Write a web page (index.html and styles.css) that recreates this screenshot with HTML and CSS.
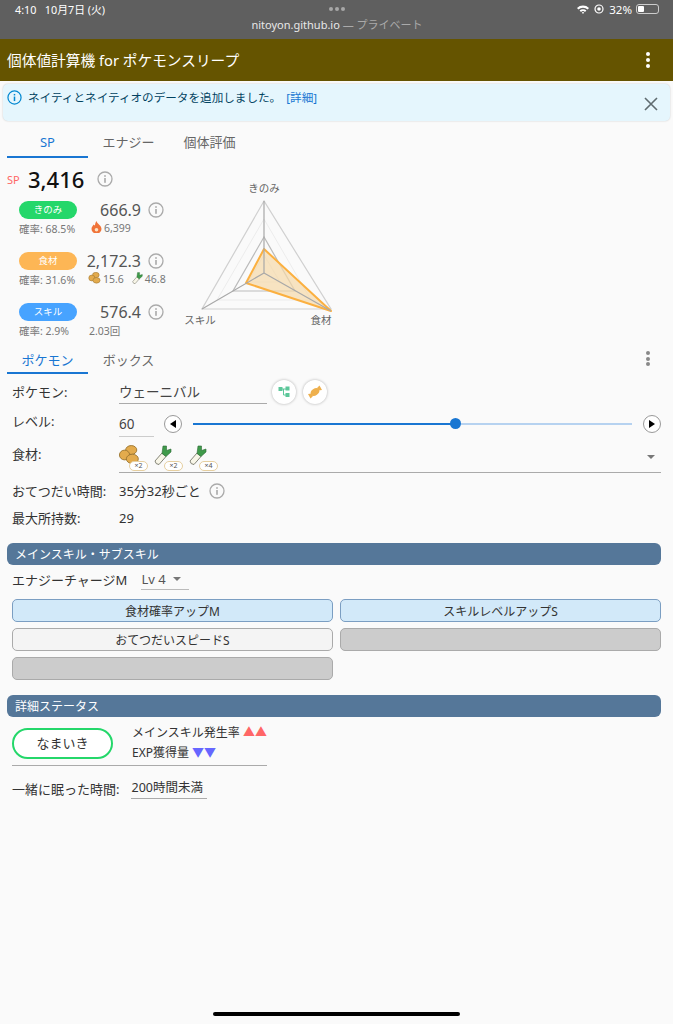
FILE: index.html
```html
<!DOCTYPE html>
<html lang="ja">
<head>
    <meta charset="UTF-8">
    <meta name="viewport" content="width=device-width, initial-scale=1.0">
    <title>個体値計算機 for ポケモンスリープ</title>
    <link rel="stylesheet" href="styles.css">
</head>
<body>

<svg class="defs" width="0" height="0">
    <defs>
        <g id="info">
            <circle cx="8" cy="8" r="7" fill="none" stroke="currentColor" stroke-width="1.3"/>
            <rect x="7.2" y="7" width="1.6" height="4.8" fill="currentColor"/>
            <rect x="7.2" y="4.2" width="1.6" height="1.6" fill="currentColor"/>
        </g>
        <g id="beans">
            <ellipse cx="11" cy="4.5" rx="5" ry="4" fill="#e3ab4d" stroke="#9a7430" stroke-width="0.8"/>
            <ellipse cx="5" cy="9" rx="4.6" ry="4.4" fill="#e3ab4d" stroke="#9a7430" stroke-width="0.8"/>
            <ellipse cx="12" cy="12.5" rx="5.4" ry="4.2" fill="#e3ab4d" stroke="#9a7430" stroke-width="0.8"/>
        </g>
        <g id="leek">
            <path d="M1 16 L8 8 L12 11.5 L5 19.5 Q1.5 19.5 1 16 Z" fill="#f8f6e8" stroke="#77776a" stroke-width="0.9"/>
            <path d="M8 8.5 L9 1 L12.5 1 L12.5 5.5 L17 4 L17 7 L12 11.5 Z" fill="#3f9a4a" stroke="#2d6a35" stroke-width="0.6"/>
        </g>
    </defs>
</svg>

<header class="status-bar">
    <div class="status-top">
        <span class="status-time">4:10&nbsp;&nbsp;&nbsp;10月7日 (火)</span>
        <span class="status-dots"><i></i><i></i><i></i></span>
        <span class="status-right">
            <svg width="12" height="9" viewBox="0 0 12 9"><path d="M0 3 A8.5 8.5 0 0 1 12 3 L10.6 4.6 A6.4 6.4 0 0 0 1.4 4.6 Z M2.6 5.6 A4.8 4.8 0 0 1 9.4 5.6 L8 7 A2.8 2.8 0 0 0 4 7 Z M4.8 7.6 A1.8 1.8 0 0 1 7.2 7.6 L6 9 Z" fill="#fff"/></svg>
            <svg width="10" height="10" viewBox="0 0 10 10"><circle cx="5" cy="5" r="4" fill="none" stroke="#fff" stroke-width="1.2"/><circle cx="5" cy="5" r="1.8" fill="#fff"/></svg>
            <span>32%</span>
            <span class="battery"><span class="battery-level"></span></span>
        </span>
    </div>
    <div class="status-url">nitoyon.github.io <span class="status-private">— プライベート</span></div>
</header>

<div class="app-bar">
    <span class="app-title">個体値計算機 for ポケモンスリープ</span>
    <span class="kebab kebab-white"><i></i><i></i><i></i></span>
</div>

<div class="alert">
    <svg class="alert-icon" width="15" height="15" viewBox="0 0 16 16"><use href="#info"/></svg>
    <span class="alert-text">ネイティとネイティオのデータを追加しました。 <span class="alert-link">[詳細]</span></span>
    <svg class="alert-close" width="14" height="14" viewBox="0 0 14 14"><path d="M1 1 L13 13 M13 1 L1 13" stroke="#5f6b70" stroke-width="1.6"/></svg>
</div>

<nav class="tabs tabs-rating">
    <span class="tab active">SP</span>
    <span class="tab">エナジー</span>
    <span class="tab">個体評価</span>
</nav>

<section class="rating">
    <div class="rating-left">
        <div class="sp-total">
            <span class="sp-label">SP</span>
            <span class="sp-value">3,416</span>
            <svg class="info-icon" width="16" height="16" viewBox="0 0 16 16"><use href="#info"/></svg>
        </div>

        <div class="stat">
            <div class="stat-main">
                <span class="pill pill-berry">きのみ</span>
                <span class="stat-value">666.9</span>
                <svg class="info-icon" width="16" height="16" viewBox="0 0 16 16"><use href="#info"/></svg>
            </div>
            <div class="stat-sub">
                <span class="stat-rate">確率: 68.5%</span>
                <svg class="fire" width="11" height="12" viewBox="0 0 11 12"><path d="M5.5 0 C6 3 10.5 4 10.5 8 A5 4.5 0 0 1 0.5 8 C0.5 5.5 2 5 2.5 3.5 C3.5 4.5 4 4.5 4 4 C4 3 4.5 1.5 5.5 0 Z" fill="#f0743a"/><circle cx="5.5" cy="8.8" r="1.8" fill="#fde3c4"/></svg>
                <span>6,399</span>
            </div>
        </div>

        <div class="stat">
            <div class="stat-main">
                <span class="pill pill-ingredient">食材</span>
                <span class="stat-value">2,172.3</span>
                <svg class="info-icon" width="16" height="16" viewBox="0 0 16 16"><use href="#info"/></svg>
            </div>
            <div class="stat-sub">
                <span class="stat-rate">確率: 31.6%</span>
                <svg class="sub-beans" width="13" height="12" viewBox="0 0 18 18"><use href="#beans"/></svg>
                <span class="sub-num">15.6</span>
                <svg class="sub-leek" width="11" height="12" viewBox="0 0 18 20"><use href="#leek"/></svg>
                <span>46.8</span>
            </div>
        </div>

        <div class="stat">
            <div class="stat-main">
                <span class="pill pill-skill">スキル</span>
                <span class="stat-value">576.4</span>
                <svg class="info-icon" width="16" height="16" viewBox="0 0 16 16"><use href="#info"/></svg>
            </div>
            <div class="stat-sub">
                <span class="stat-rate">確率: 2.9%</span>
                <span class="skill-count">2.03回</span>
            </div>
        </div>
    </div>

    <svg class="radar" width="170" height="170" viewBox="170 170 170 170">
        <polygon points="264,202 202,310 331,310" fill="none" stroke="#d0d0d0" stroke-width="1.2"/>
        <polygon points="264,220 217,301 311,301" fill="none" stroke="#ececec" stroke-width="1"/>
        <polygon points="264,238 233,292 295,292" fill="none" stroke="#bbb" stroke-width="1.2"/>
        <polygon points="264,256 248,283 280,283" fill="none" stroke="#ececec" stroke-width="1"/>
        <polygon points="264,250 331,312 246,284" fill="#f5d9a8" fill-opacity="0.7" stroke="#fbb040" stroke-width="2" stroke-linejoin="round"/>
        <path d="M264 202 V274 M264 274 L202 310 M264 274 L331 312" stroke="#a8a8a8" stroke-width="1.2" fill="none"/>
        <text class="radar-label" x="264" y="193" text-anchor="middle">きのみ</text>
        <text class="radar-label" x="200" y="325" text-anchor="middle">スキル</text>
        <text class="radar-label" x="321" y="325" text-anchor="middle">食材</text>
    </svg>
</section>

<nav class="tabs tabs-form">
    <span class="tab active">ポケモン</span>
    <span class="tab">ボックス</span>
    <span class="kebab kebab-gray"><i></i><i></i><i></i></span>
</nav>

<section class="form">
    <div class="form-row row-pokemon">
        <label class="form-label">ポケモン:</label>
        <span class="input input-pokemon">ウェーニバル</span>
        <span class="round-btn">
            <svg width="12" height="12" viewBox="0 0 12 12"><path d="M3 3 H9 M5.5 3 V9 H9" stroke="#5cc79a" fill="none"/><rect x="0.5" y="1" width="4" height="4" fill="#5cc79a"/><rect x="7.5" y="0.5" width="4" height="4" fill="#5cc79a"/><rect x="7.5" y="7" width="4" height="4" fill="#5cc79a"/></svg>
        </span>
        <span class="round-btn">
            <svg width="16" height="16" viewBox="0 0 16 16"><ellipse cx="8" cy="8" rx="4.6" ry="3.4" transform="rotate(-35 8 8)" fill="#eeb04e"/><path d="M4.5 9.5 L1 10 L3.5 14.5 L6 12 Z M11.5 6.5 L15 6 L12.5 1.5 L10 4 Z" fill="#eeb04e"/></svg>
        </span>
    </div>

    <div class="form-row row-level">
        <label class="form-label">レベル:</label>
        <span class="input input-level">60</span>
        <span class="step-btn"><span class="arrow-left"></span></span>
        <div class="slider">
            <div class="slider-fill"></div>
            <span class="slider-thumb"></span>
        </div>
        <span class="step-btn"><span class="arrow-right"></span></span>
    </div>

    <div class="form-row row-ingredients">
        <label class="form-label">食材:</label>
        <div class="ingredients">
            <span class="ingredient">
                <svg width="20" height="20" viewBox="0 0 18 18"><use href="#beans"/></svg>
                <span class="badge">×2</span>
            </span>
            <span class="ingredient">
                <svg width="18" height="20" viewBox="0 0 18 20"><use href="#leek"/></svg>
                <span class="badge">×2</span>
            </span>
            <span class="ingredient">
                <svg width="18" height="20" viewBox="0 0 18 20"><use href="#leek"/></svg>
                <span class="badge">×4</span>
            </span>
            <span class="select-arrow arrow-ingredients"></span>
        </div>
    </div>

    <div class="form-row row-help">
        <label class="form-label">おてつだい時間:</label>
        <span class="plain">35分32秒ごと</span>
        <svg class="info-icon" width="16" height="16" viewBox="0 0 16 16"><use href="#info"/></svg>
    </div>

    <div class="form-row row-carry">
        <label class="form-label">最大所持数:</label>
        <span class="plain">29</span>
    </div>
</section>

<h2 class="section-head">メインスキル・サブスキル</h2>
<div class="skill-row">
    <span>エナジーチャージM</span>
    <span class="level-select">Lv 4<span class="select-arrow"></span></span>
</div>
<div class="subskills">
    <button class="subskill blue">食材確率アップM</button>
    <button class="subskill blue">スキルレベルアップS</button>
    <button class="subskill white">おてつだいスピードS</button>
    <button class="subskill empty"></button>
    <button class="subskill empty"></button>
</div>

<h2 class="section-head">詳細ステータス</h2>
<div class="nature">
    <span class="nature-btn">なまいき</span>
    <div class="nature-effects">
        <div>メインスキル発生率 <span class="up">▲▲</span></div>
        <div>EXP獲得量 <span class="down">▼▼</span></div>
    </div>
</div>
<div class="sleep-row">
    <span>一緒に眠った時間:</span>
    <span class="sleep-value">200時間未満</span>
</div>

<div class="home-indicator"></div>

</body>
</html>
```

FILE: styles.css
```css
/* General styling */
* {
    box-sizing: border-box;
}

body {
    font-family: "Noto Sans", "Noto Sans CJK JP", sans-serif;
    background-color: #fafafa;
    color: #333;
    margin: 0;
    height: 1024px;
    overflow: hidden;
    position: relative;
    font-size: 13px;
}

.defs {
    position: absolute;
}

/* Status bar */
.status-bar {
    height: 39px;
    background: #5f5f5f;
    color: #fff;
    padding: 1px 14px 0 15px;
}

.status-top {
    display: flex;
    justify-content: space-between;
    align-items: center;
    height: 16px;
    font-size: 10.8px;
}

.status-time,
.status-right {
    width: 140px;
}

.status-dots {
    display: flex;
    gap: 2px;
}

.status-dots i {
    display: block;
    width: 4px;
    height: 4px;
    border-radius: 50%;
    background: #a8a8a8;
}

.status-right {
    display: flex;
    justify-content: flex-end;
    align-items: center;
    gap: 5px;
    font-size: 11.5px;
}

.battery {
    width: 23px;
    height: 10px;
    border: 1px solid #ccc;
    border-radius: 3px;
    padding: 1px;
    margin-left: -1px;
}

.battery-level {
    display: block;
    width: 6px;
    height: 100%;
    background: #fff;
    border-radius: 1px;
}

.status-url {
    text-align: center;
    font-size: 11px;
    line-height: 16px;
    color: #e8e8e8;
}

.status-private {
    color: #aaa;
}

/* App bar */
.app-bar {
    height: 42px;
    background: #655400;
    color: #fff;
    display: flex;
    justify-content: space-between;
    align-items: center;
    padding: 0 23px 0 7px;
}

.app-title {
    font-size: 14.7px;
    margin-top: -1px;
}

.kebab {
    display: flex;
    flex-direction: column;
    gap: 2px;
}

.kebab i {
    display: block;
    width: 4px;
    height: 4px;
    border-radius: 50%;
    background: #fff;
}

.kebab-gray {
    margin-left: auto;
    margin-right: 11px;
    gap: 1.5px;
}

.kebab-gray i {
    background: #888;
}

/* Alert */
.alert {
    height: 37px;
    margin: 3px 3px 0;
    background: #e5f6fd;
    border-radius: 5px;
    box-shadow: 0 0 2px rgba(0, 0, 0, 0.2);
    display: flex;
    align-items: flex-start;
    padding: 6px 12px 0 4px;
    color: #014361;
}

.alert-icon {
    color: #0288d1;
    margin-right: 6px;
}

.alert-text {
    font-size: 11.6px;
    line-height: 15px;
    flex: 1;
}

.alert-link {
    color: #1976d2;
    margin-left: 2px;
}

.alert-close {
    margin-top: 7px;
}

/* Tabs */
.tabs {
    display: flex;
    align-items: center;
    margin: 0 12px 0 7px;
}

.tab {
    width: 81px;
    text-align: center;
    color: #666;
    font-size: 13px;
    line-height: 35px;
    height: 33px;
}

.tab.active {
    color: #1976d2;
    border-bottom: 2px solid #1976d2;
}

.tabs-rating {
    margin-top: 4px;
}

/* Rating */
.rating {
    display: flex;
    height: 188px;
    padding-top: 6px;
}

.rating-left {
    width: 170px;
    padding-left: 7px;
}

.sp-total {
    display: flex;
    align-items: center;
    height: 30px;
    margin-bottom: 6px;
}

.sp-label {
    font-size: 11px;
    color: #f66;
    width: 21px;
}

.sp-value {
    font-size: 22px;
    font-weight: 500;
    color: #111;
    width: 69px;
}

.info-icon {
    color: #aaa;
    flex: none;
}

.stat {
    height: 51px;
    padding-left: 12px;
}

.stat-main {
    display: flex;
    align-items: center;
    height: 19px;
}

.pill {
    width: 58px;
    height: 18px;
    border-radius: 9px;
    color: #fff;
    font-size: 9.5px;
    line-height: 18px;
    text-align: center;
}

.pill-berry {
    background: #24d76a;
}

.pill-ingredient {
    background: #fdb655;
}

.pill-skill {
    background: #47a3ff;
}

.stat-value {
    width: 64px;
    text-align: right;
    font-size: 16px;
    color: #555;
    margin-right: 7px;
}

.stat-sub {
    display: flex;
    align-items: center;
    height: 20px;
    margin-top: -1px;
    font-size: 10.5px;
    color: #777;
}

.stat-rate {
    width: 71px;
    flex: none;
}

.fire {
    margin: 0 2px 2px 1px;
}

.sub-beans {
    margin: 0 2px 2px -2px;
}

.sub-num {
    margin-right: 8px;
}

.sub-leek {
    margin: 0 2px 3px 0;
}

.skill-count {
    margin-left: -1px;
}

.radar {
    flex: none;
    margin-top: 5px;
}

.radar-label {
    font-size: 10.5px;
    fill: #666;
}

/* Pokemon form */
.tabs-form {
    margin-top: -3px;
    margin-right: 12px;
    height: 31px;
}

.tabs-form .tab {
    height: 31px;
    line-height: 20px;
    padding-top: 7px;
}

.form {
    padding: 0 12px;
}

.form-row {
    display: flex;
    align-items: center;
}

.form-label {
    width: 107px;
    flex: none;
    font-size: 13px;
}

.plain {
    font-size: 13px;
}

.input {
    font-size: 13.5px;
    border-bottom: 1px solid #aaa;
    line-height: 20px;
    color: #444;
    flex: none;
}

.row-pokemon {
    height: 31px;
    margin-top: 4px;
}

.row-pokemon .form-label {
    margin-top: -5px;
}

.input-pokemon {
    width: 148px;
    height: 22px;
    margin-top: -1px;
}

.round-btn {
    width: 24px;
    height: 24px;
    border-radius: 50%;
    background: #fff;
    box-shadow: 0 0 3px rgba(0, 0, 0, 0.3);
    margin: -4px 2px 0 5px;
    display: flex;
    justify-content: center;
    align-items: center;
}

.row-level {
    height: 30px;
}

.row-level .form-label {
    margin-top: -7px;
}

.input-level {
    width: 35px;
    height: 25px;
    margin-right: 10px;
    padding-top: 2px;
    border-bottom-color: #ccc;
}

.step-btn {
    width: 18px;
    height: 18px;
    border-radius: 50%;
    border: 1px solid #999;
    background: #fff;
    display: flex;
    justify-content: center;
    align-items: center;
    flex: none;
}

.arrow-left {
    border-style: solid;
    border-width: 4px 6px 4px 0;
    border-color: transparent #000 transparent transparent;
}

.arrow-right {
    border-style: solid;
    border-width: 4px 0 4px 6px;
    border-color: transparent transparent transparent #000;
}

.slider {
    position: relative;
    flex: 1;
    height: 2px;
    margin: 0 11px;
    background: #b6d2f0;
}

.slider-fill {
    width: 59.7%;
    height: 2px;
    background: #1976d2;
}

.slider-thumb {
    position: absolute;
    left: 59.7%;
    top: -5px;
    margin-left: -5px;
    width: 11px;
    height: 11px;
    border-radius: 50%;
    background: #1976d2;
}

.row-ingredients {
    height: 33px;
    margin-top: 4px;
    align-items: flex-start;
}

.row-ingredients .form-label {
    margin-top: 1px;
}

.ingredients {
    flex: 1;
    display: flex;
    height: 30px;
    border-bottom: 1px solid #aaa;
    position: relative;
    gap: 15px;
}

.ingredient {
    position: relative;
    width: 20px;
    height: 24px;
    margin-top: 2px;
}

.ingredient svg {
    display: block;
}

.badge {
    position: absolute;
    left: 10px;
    top: 16px;
    width: 19px;
    height: 10px;
    border: 1px solid #e6cfa0;
    border-radius: 5px;
    background: #fff;
    font-size: 7px;
    line-height: 8px;
    text-align: center;
    color: #555;
}

.select-arrow {
    display: inline-block;
    border-style: solid;
    border-width: 4px 4.5px 0 4.5px;
    border-color: #777 transparent transparent transparent;
}

.arrow-ingredients {
    position: absolute;
    right: 6px;
    top: 12px;
}

.row-help {
    height: 27px;
    margin-top: 1px;
}

.row-help .plain {
    margin-right: 8px;
}

.row-carry {
    height: 27px;
}

/* Section heads */
.section-head {
    margin: 12px 12px 0 7px;
    height: 22px;
    background: #557799;
    color: #fff;
    border-radius: 6px;
    font-size: 12px;
    font-weight: 400;
    line-height: 23px;
    padding-left: 8px;
}

/* Skills */
.skill-row {
    display: flex;
    align-items: center;
    height: 29px;
    padding: 0 12px;
    font-size: 13px;
    gap: 14px;
}

.level-select {
    width: 48px;
    height: 20px;
    border-bottom: 1px solid #bbb;
    color: #555;
    font-size: 13px;
    line-height: 19px;
    display: flex;
    align-items: center;
    gap: 7px;
}

.subskills {
    display: grid;
    grid-template-columns: 321px 321px;
    grid-auto-rows: 23px;
    gap: 6px 7px;
    padding: 5px 0 0 12px;
}

.subskill {
    border-radius: 5px;
    font-family: inherit;
    font-size: 12px;
    color: #333;
    padding: 0;
    border: 1px solid #aaa;
}

.subskill.blue {
    background: #d2e9f9;
    border-color: #7b9ec2;
}

.subskill.white {
    background: #f4f4f4;
}

.subskill.empty {
    background: #cccccc;
}

.subskills + .section-head {
    margin-top: 15px;
}

/* Nature */
.nature {
    display: flex;
    width: 255px;
    height: 38px;
    margin: 11px 0 0 12px;
    border-bottom: 1px solid #aaa;
}

.nature-btn {
    width: 101px;
    height: 31px;
    border: 2px solid #24d76a;
    border-radius: 16px;
    background: #fff;
    text-align: center;
    font-size: 13px;
    line-height: 27px;
    flex: none;
}

.nature-effects {
    margin: -5px 0 0 19px;
    font-size: 12px;
    line-height: 20px;
    white-space: nowrap;
}

.up {
    color: #f66;
}

.down {
    color: #66f;
}

/* Sleep time */
.sleep-row {
    display: flex;
    align-items: center;
    margin: 11px 0 0 12px;
    font-size: 13px;
    gap: 12px;
}

.sleep-value {
    width: 76px;
    height: 22px;
    font-size: 12.5px;
    line-height: 21px;
    border-bottom: 1px solid #aaa;
    white-space: nowrap;
}

.home-indicator {
    position: absolute;
    left: 213px;
    bottom: 8px;
    width: 247px;
    height: 4px;
    border-radius: 2px;
    background: #000;
}
```
